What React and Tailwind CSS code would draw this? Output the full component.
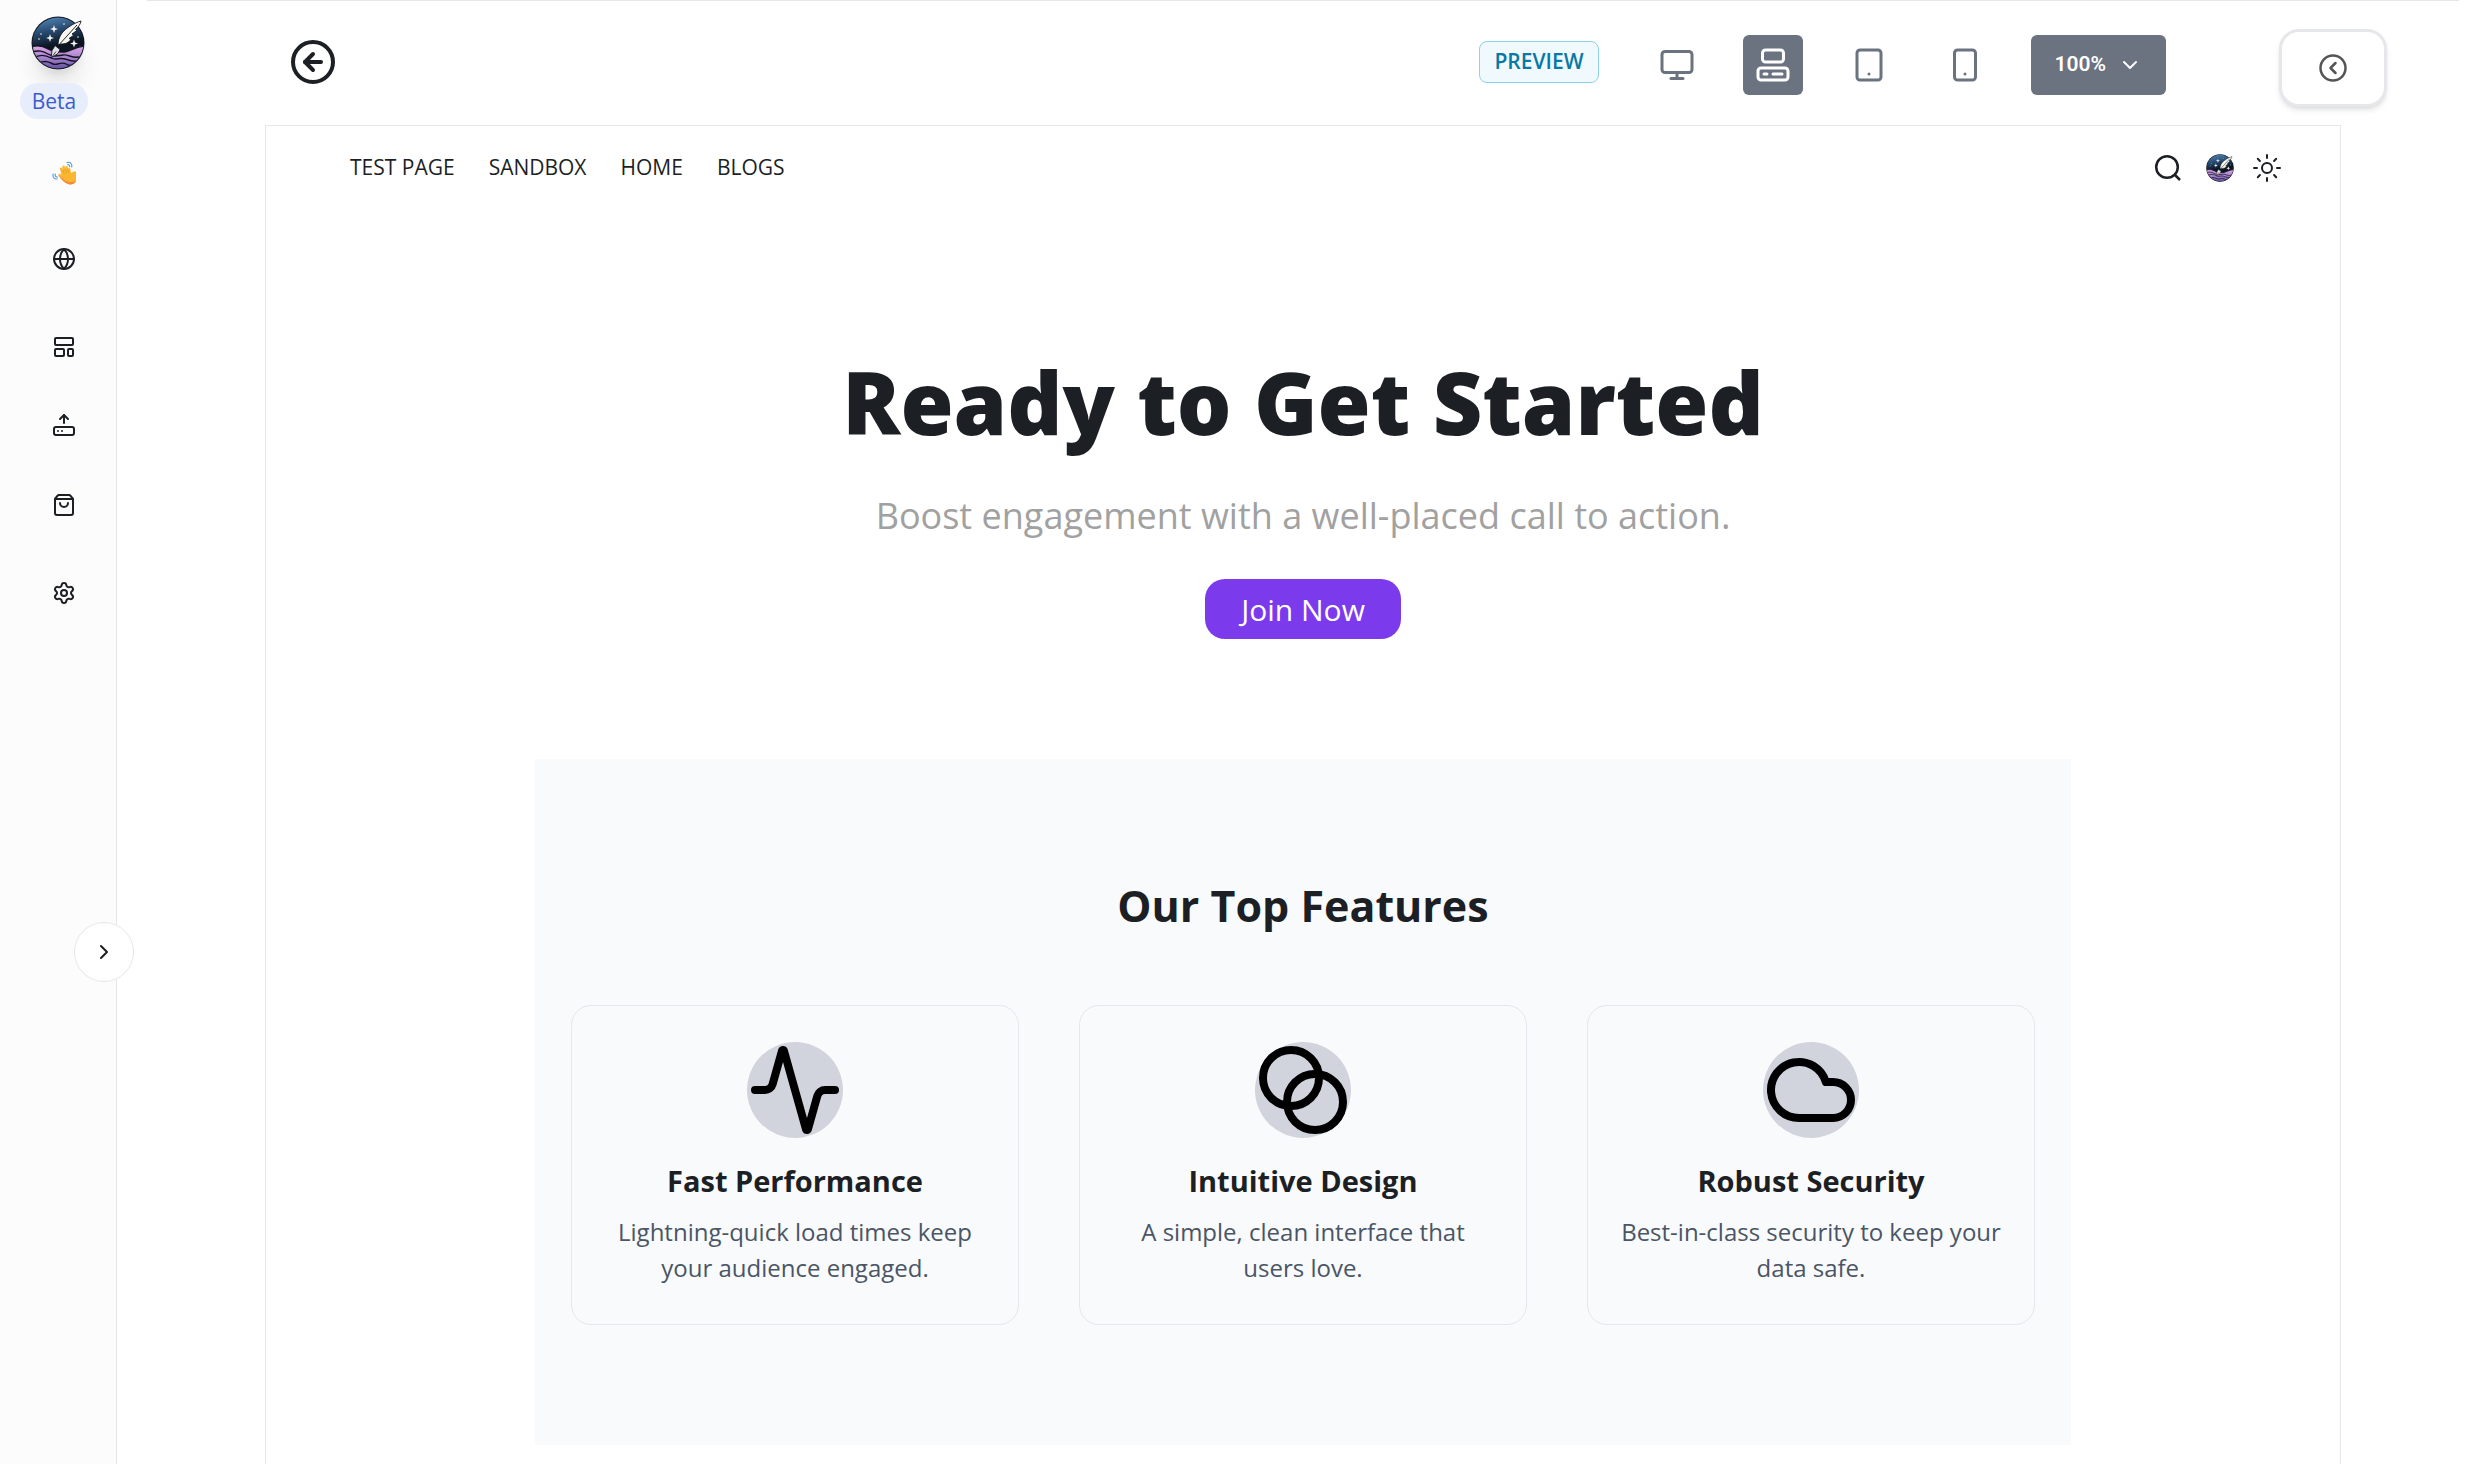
import {
  Activity,
  Blend,
  ChevronDown,
  ChevronRight,
  CircleArrowLeft,
  CircleChevronLeft,
  Cloud,
  Computer,
  Globe,
  HardDriveUpload,
  LayoutTemplate,
  Monitor,
  Settings,
  ShoppingBag,
  Smartphone,
  Tablet,
} from "lucide-react";
import { IoSunnyOutline } from "react-icons/io5";

const navLinks = ["Test Page", "Sandbox", "Home", "Blogs"];

const devices = [
  { name: "Desktop", icon: Monitor },
  { name: "Laptop", icon: Computer, active: true },
  { name: "Tablet", icon: Tablet },
  { name: "Mobile", icon: Smartphone },
];

const features = [
  {
    icon: Activity,
    title: "Fast Performance",
    text: "Lightning-quick load times keep your audience engaged.",
  },
  {
    icon: Blend,
    title: "Intuitive Design",
    text: "A simple, clean interface that users love.",
  },
  {
    icon: Cloud,
    title: "Robust Security",
    text: "Best-in-class security to keep your data safe.",
  },
];

// Night sky over purple waves, with a quill
const Logo = ({ id, className }) => (
  <svg viewBox="0 0 54 54" className={className} aria-hidden="true">
    <defs>
      <linearGradient id={`${id}-sky`} x1="0.3" y1="0" x2="0.5" y2="1">
        <stop offset="0" stopColor="#5288b8" />
        <stop offset="0.28" stopColor="#274a70" />
        <stop offset="0.55" stopColor="#0b1420" />
      </linearGradient>
      <linearGradient id={`${id}-wave`} x1="0" y1="0" x2="0" y2="1">
        <stop offset="0" stopColor="#dba6e4" />
        <stop offset="0.5" stopColor="#a783cc" />
        <stop offset="1" stopColor="#5a4a9c" />
      </linearGradient>
      <clipPath id={`${id}-clip`}>
        <circle cx="27" cy="27" r="25.5" />
      </clipPath>
    </defs>
    <circle cx="27" cy="27" r="26.5" fill="#10151f" />
    <g clipPath={`url(#${id}-clip)`}>
      <rect width="54" height="54" fill={`url(#${id}-sky)`} />
      <path d="M0 31c6-2 12-1 17 2s9 3 15 3 11-5 22-6v24H0z" fill={`url(#${id}-wave)`} />
      <g fill="none" stroke="#141226" strokeWidth="1.4">
        <path d="M0 31c6-2 12-1 17 2s9 3 15 3 11-5 22-6" />
        <path d="M0 36c8-2 12-1 17 2s9 2 15 1 10 5 20 1" />
        <path d="M2 42c7-4 13-3 18 0s8-1 14 1 9 3 14 2" />
        <path d="M8 47c6-3 10-1 14 1s8-3 13 0 5 1 7 1" />
      </g>
    </g>
    <g fill="#f6f3ec">
      <path d="M23 9l1 3 3 1-3 1-1 3-1-3-3-1 3-1z" />
      <path d="M19 18l1 3 3 1-3 1-1 3-1-3-3-1 3-1z" />
      <path d="M43 23.500l1 3 3 1-3 1-1 3-1-3-3-1 3-1z" />
      <circle cx="10" cy="18" r="0.800" />
      <circle cx="8" cy="23" r="0.800" />
      <circle cx="33" cy="8" r="0.800" />
      <circle cx="47" cy="21" r="0.800" />
    </g>
    <path
      d="M50 5c-7 2-15 7-19 12-3 4-4 8-4 12l3-1c4 0 8-1 10-5l-2-.5 5-3.500-2-1 5-3.500-1.500-1c3-3 5-5 5.500-8.500z"
      fill="#f8f6f1"
      stroke="#10151f"
      strokeWidth="0.900"
    />
    <path d="M46 9L26 31" stroke="#10151f" strokeWidth="0.900" />
    <path d="M24 29.500l5 4-2 4-7 4.500 1-7.500z" fill="#e3dfe4" stroke="#10151f" strokeWidth="0.900" />
    <path d="M20.500 41.500l4.500-6" stroke="#10151f" strokeWidth="0.800" />
  </svg>
);

const WaveHand = () => (
  <svg viewBox="0 0 24 24" className="size-6" aria-hidden="true">
    <g fill="none" stroke="#4d9be0" strokeWidth="1.1" strokeLinecap="round">
      <path d="M15 1.500c3-1 5.500 1.200 4.800 4.500M15.500 3.800c1.500-.4 2.500.6 2.200 2" />
      <path d="M1.200 13c-1 2.800 1 5.500 4 5M3.300 13c-.6 1.800.6 3.300 2.400 3" />
    </g>
    <path
      d="M6.500 14.500c-.6-1.500 1-2.300 2.200-1.200l.8.700-1.500-6c-.3-1.700 1.700-2 2.200-.5l.4 1.200-.2-2.700c-.1-1.700 2-1.900 2.400-.4l.4 1.800.2-1.400c.3-1.500 2.100-1.300 2.400.1l.3 1.500c.6-1.200 2-.8 2.200.5l.7 3.900c.8-.8 2.500-1.500 5-1.500V20.500c-1.500 2.300-5 3.600-8 2.600-3.500-1.200-7-5-9.500-8.600z"
      fill="#fbb631"
    />
    <path d="M6.500 14.500c2.500 3.600 6 7.400 9.500 8.600 3 1 6.500-.3 8-2.600-5 1.200-9 .6-12-1.500z" fill="#f58a3c" />
    <path d="M10.800 9l1.400 4M13.500 8l1 4M16.100 8.500l.6 3.500" fill="none" stroke="#e89420" strokeWidth="0.700" />
  </svg>
);

const SearchIcon = () => (
  <svg viewBox="0 0 28 28" className="size-7" fill="none" stroke="currentColor" strokeWidth="2.500">
    <circle cx="13" cy="13" r="10.800" />
    <path d="M20.500 20.500l5.500 5.500" />
  </svg>
);

const Sidebar = () => (
  <aside className="relative w-[117px] shrink-0 border-r border-gray-200 bg-[#fcfcfd]">
    <div className="flex flex-col items-center pt-4">
      <a href="#home" aria-label="Home" className="rounded-full shadow-xl">
        <Logo id="brand" className="size-[54px]" />
      </a>
      <span className="mr-2 mt-[13px] rounded-full bg-[#e8edfc] px-3 text-[21px] font-medium leading-9 text-[#3b5bcc]">
        Beta
      </span>
    </div>
    <nav className="mt-[42px] flex flex-col items-center pl-[11px]">
      <a href="#welcome" aria-label="Welcome">
        <WaveHand />
      </a>
      <a href="#sites" aria-label="Sites" className="mt-[62px]">
        <Globe className="size-6" />
      </a>
      <a href="#templates" aria-label="Templates" className="mt-16">
        <LayoutTemplate className="size-6" />
      </a>
      <a href="#uploads" aria-label="Uploads" className="mt-[54px]">
        <HardDriveUpload className="size-6" />
      </a>
      <a href="#store" aria-label="Store" className="mt-14">
        <ShoppingBag className="size-6" />
      </a>
      <a href="#settings" aria-label="Settings" className="mt-16">
        <Settings className="size-6" />
      </a>
    </nav>
    <button
      aria-label="Expand sidebar"
      className="absolute -right-[18px] top-[922px] flex size-[60px] items-center justify-center rounded-full border border-gray-200 bg-white"
    >
      <ChevronRight className="size-6" />
    </button>
  </aside>
);

const Toolbar = () => (
  <header className="ml-[30px] mr-[26px] flex h-[125px] items-start border-t border-gray-200">
    <button aria-label="Back" className="ml-[142px] mt-[37px]">
      <CircleArrowLeft className="size-12" />
    </button>
    <div className="ml-auto flex items-start">
      <span className="mt-10 flex h-[42px] items-center rounded-lg border border-[#8fd0ea] bg-[#f0f9fd] px-[14px] text-[21px] font-semibold text-[#0878a4]">
        PREVIEW
      </span>
      <div className="ml-12 mt-[34px] flex gap-9">
        {devices.map(({ name, icon: Icon, active }) => (
          <button
            key={name}
            aria-label={name}
            className={`flex size-[60px] items-center justify-center rounded-md ${
              active ? "bg-[#6b7280] text-white" : "text-[#6b7280]"
            }`}
          >
            <Icon className="size-9" />
          </button>
        ))}
      </div>
      <button className="ml-9 mt-[34px] flex h-[60px] items-center gap-3 rounded-md bg-[#6b7280] px-6 font-[Roboto,sans-serif] text-[21px] font-semibold text-white">
        100%
        <ChevronDown className="size-6" />
      </button>
      <button
        aria-label="Open panel"
        className="ml-[113px] mr-[72px] mt-7 flex h-[78px] w-[108px] items-center justify-center rounded-[20px] border-3 border-gray-200 bg-white text-[#555] shadow-md"
      >
        <CircleChevronLeft className="size-[30px]" />
      </button>
    </div>
  </header>
);

const FeatureCard = ({ icon: Icon, title, text }) => (
  <div className="flex flex-1 flex-col items-center rounded-[20px] border border-gray-200 px-8 py-9 text-center">
    <div className="rounded-full bg-[#d1d4dc] text-black">
      <Icon className="size-24" />
    </div>
    <h3 className="mt-[22px] text-[29px] font-bold leading-[42px]">{title}</h3>
    <p className="mb-[2px] mt-3 text-[24px] leading-9 text-gray-600">{text}</p>
  </div>
);

export default function App() {
  return (
    <div className="flex min-h-screen bg-white font-['Open_Sans','Noto_Sans',sans-serif] text-[#1c1f24]">
      <Sidebar />
      <div className="flex min-w-0 flex-1 flex-col">
        <Toolbar />
        <main className="ml-[148px] mr-36 flex-1 border-x border-t border-gray-200">
          <div className="flex items-center justify-between pl-[84px] pr-[57px] pt-6">
            <nav className="flex gap-[34px] pb-[2px] text-[21px] uppercase leading-[34px]">
              {navLinks.map((link) => (
                <a key={link} href="#page">
                  {link}
                </a>
              ))}
            </nav>
            <div className="flex items-center">
              <button aria-label="Search">
                <SearchIcon />
              </button>
              <Logo id="avatar" className="ml-6 size-[28px]" />
              <button aria-label="Toggle theme" className="ml-[17px]">
                <IoSunnyOutline className="size-8" />
              </button>
            </div>
          </div>

          {/* Call to action */}
          <section className="flex flex-col items-center pb-[120px] pt-[171px] text-center">
            <h1 className="text-[86px] font-extrabold leading-[90px]">Ready to Get Started</h1>
            <p className="mt-[42px] text-[36px] leading-[54px] text-neutral-400">
              Boost engagement with a well-placed call to action.
            </p>
            <button className="mt-9 h-[60px] rounded-[20px] bg-[#7c3aed] px-9 text-[30px] text-white">
              Join Now
            </button>
          </section>

          {/* Features */}
          <section className="mx-auto mb-[19px] max-w-[1536px] bg-[#f9fafc] px-9 py-30">
            <h2 className="text-center text-[43px] font-bold leading-[54px]">Our Top Features</h2>
            <div className="mt-[72px] flex gap-[60px]">
              {features.map((feature) => (
                <FeatureCard key={feature.title} {...feature} />
              ))}
            </div>
          </section>
        </main>
      </div>
    </div>
  );
}
